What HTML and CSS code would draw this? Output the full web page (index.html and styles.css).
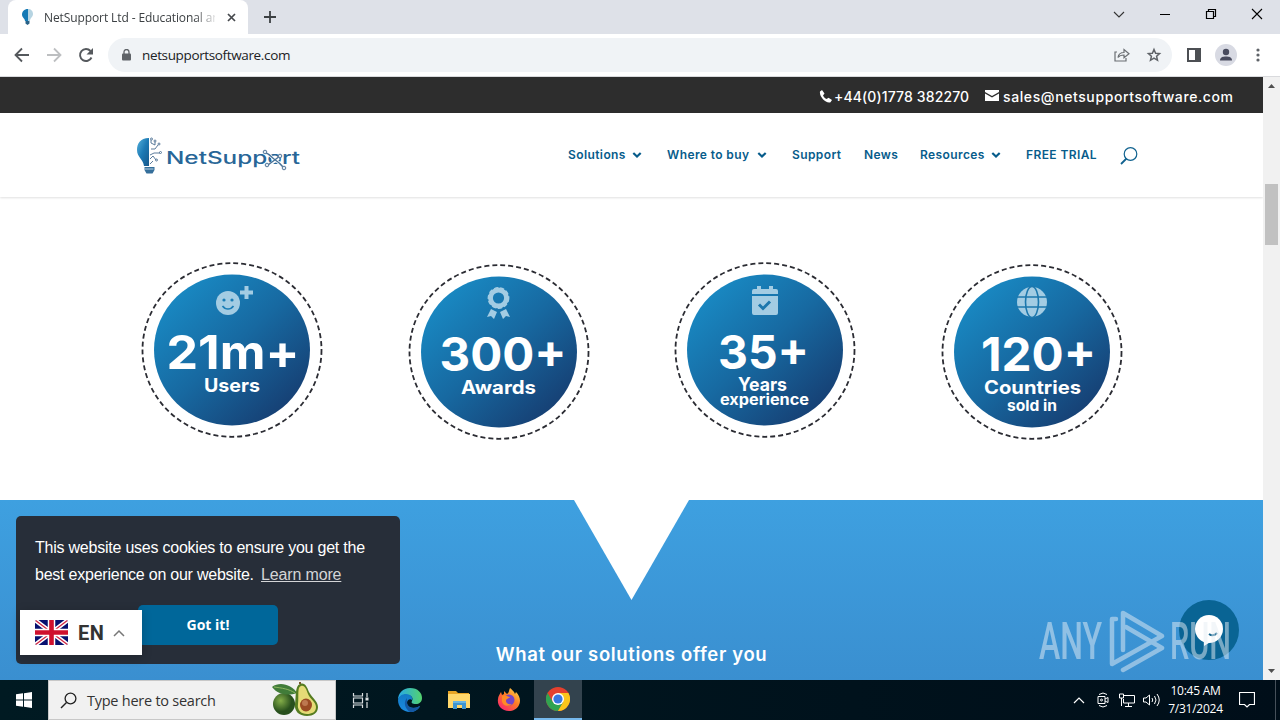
FILE: index.html
```html
<!DOCTYPE html>
<html lang="en">
<head>
    <meta charset="UTF-8">
    <meta name="viewport" content="width=device-width, initial-scale=1.0">
    <title>NetSupport Ltd - Educational and Corporate Software</title>
    <link rel="stylesheet" href="styles.css">
</head>
<body>
<div class="desktop">
    <!-- Browser tabs -->
    <div class="tabstrip">
        <div class="tab">
            <svg class="favicon" width="12" height="16" viewBox="0 0 12 16"><path d="M6 0C2 0 0 2.500 0 5.500 0 8.500 3 9.500 3 12h3z" fill="#1479b5"/><path d="M6 0c3 0 5 2 5 5S8 9 8 12H6z" fill="#b6d4e2"/><path d="M3.500 12h4v2.500L5.500 16l-2-1.500z" fill="#2a6287"/></svg>
            <span class="tab-title">NetSupport Ltd - Educational and</span>
            <svg class="tab-close" width="9" height="9" viewBox="0 0 9 9"><path d="M1 1l7 7M8 1L1 8" stroke="#45484c" stroke-width="1.700"/></svg>
        </div>
        <svg class="new-tab" width="12" height="12" viewBox="0 0 12 12"><path d="M6 0v12M0 6h12" stroke="#3c4043" stroke-width="1.800"/></svg>
        <div class="window-controls">
            <svg width="12" height="12" viewBox="0 0 12 12"><path d="M1 4l5 5 5-5" fill="none" stroke="#333" stroke-width="1.100"/></svg>
            <svg width="12" height="12" viewBox="0 0 12 12"><path d="M1 6.500h10" stroke="#000"/></svg>
            <svg width="12" height="12" viewBox="0 0 12 12"><path d="M1.500 3.500h7v7h-7zM3.500 3.500v-2h7v7h-2" fill="none" stroke="#000" stroke-width="1.200"/></svg>
            <svg width="12" height="12" viewBox="0 0 12 12"><path d="M1 1l10 10M11 1L1 11" stroke="#000" stroke-width="1.100"/></svg>
        </div>
    </div>
    <!-- Address bar -->
    <div class="toolbar">
        <svg width="16" height="16" viewBox="0 0 16 16"><path d="M15 8H2M8 1.500L1.500 8 8 14.500" fill="none" stroke="#55595d" stroke-width="1.800"/></svg>
        <svg width="16" height="16" viewBox="0 0 16 16"><path d="M1 8h13M8 1.500L14.500 8 8 14.500" fill="none" stroke="#bdbfc1" stroke-width="1.800"/></svg>
        <svg width="16" height="16" viewBox="0 0 16 16"><path d="M13.500 10.500A6 6 0 1 1 12.500 4" fill="none" stroke="#55595d" stroke-width="1.900"/><path d="M15 1v6.500H8.500z" fill="#55595d"/></svg>
        <div class="omnibox">
            <svg width="9" height="12" viewBox="0 0 9 12"><rect y="4.500" width="9" height="7" rx="1" fill="#5f6368"/><path d="M2 5V3a2.500 2.500 0 0 1 5 0v2" fill="none" stroke="#5f6368" stroke-width="1.300"/></svg>
            <span class="url">netsupportsoftware.com</span>
            <svg class="share" width="16" height="14" viewBox="0 0 16 14"><path d="M3 4H1v9h11v-3" fill="none" stroke="#6b6f73" stroke-width="1.200"/><path d="M4 9.500c.5-3.500 3-5 6-5V1.500l5 4.300-5 4V7C7.500 7 5.500 7.500 4 9.500z" fill="none" stroke="#6b6f73" stroke-width="1.200"/></svg>
            <svg width="16" height="16" viewBox="0 0 16 16"><path d="M8 2.500l1.600 3.700 4 .4-3 2.700.9 4L8 11.200l-3.500 2.100.9-4-3-2.700 4-.4z" fill="none" stroke="#5f6368" stroke-width="1.500"/></svg>
        </div>
        <svg class="side-panel" width="14" height="14" viewBox="0 0 14 14"><path d="M0 0h14v14H0zM2 2v10h6V2z" fill="#4c4f53" fill-rule="evenodd"/></svg>
        <svg class="avatar" width="22" height="22" viewBox="0 0 22 22"><circle cx="11" cy="11" r="11" fill="#d8dae3"/><circle cx="11" cy="8" r="3.200" fill="#484b5e"/><path d="M5 16.500c0-3.500 3-4 6-4s6 .5 6 4z" fill="#484b5e"/></svg>
        <svg class="kebab" width="4" height="14" viewBox="0 0 4 14" fill="#5f6368"><circle cx="2" cy="2" r="1.600"/><circle cx="2" cy="7" r="1.600"/><circle cx="2" cy="12" r="1.600"/></svg>
    </div>

    <div class="viewport">
        <main class="page">
            <div class="top-header">
                <svg width="13" height="13" viewBox="0 0 13 13"><path d="M1 1.500L3 0l2.500 3.500-1.500 2c1 1.800 2 2.800 3.600 3.600l1.900-1.300 3.500 2.200-1.500 2.300C7 14 0 6.500 1 1.500z" fill="#fff"/></svg>
                <span class="phone">+44(0)1778 382270</span>
                <svg class="envelope" width="14" height="11" viewBox="0 0 14 11"><path d="M0 0h14v2L7 6 0 2zM0 3.500l7 4 7-4V11H0z" fill="#fff"/></svg>
                <span class="email">sales@netsupportsoftware.com</span>
            </div>
            <header class="main-header">
                <svg class="logo" width="170" height="42" viewBox="0 0 170 42">
                    <defs><linearGradient id="bulb" x1="0" y1="0" x2="1" y2="1"><stop offset="0" stop-color="#55b1dc"/><stop offset=".5" stop-color="#1c79b4"/><stop offset="1" stop-color="#17588c"/></linearGradient></defs>
                    <path d="M15 3C6 3 3 9 3 15c0 7 6 9 7 16h5z" fill="url(#bulb)"/>
                    <path d="M10.500 32h10v3l-2 3.500h-6l-2-3.500z" fill="#356f9b"/><path d="M10.500 34h9" stroke="#b8d2e3"/>
                    <g fill="none" stroke="#496d91" stroke-width=".9"><path d="M17 5v3l4 2V7M17 14h4l3-4M16 20l4-2h6M16 24l3-3 3 4M16 29l3-3"/><circle cx="17.500" cy="4" r="1"/><circle cx="21" cy="6" r="1"/><circle cx="25" cy="9" r="1"/><circle cx="26.500" cy="17.500" r="1"/><circle cx="22.500" cy="25" r="1"/></g>
                    <text class="logo-text" x="32" y="28.500" textLength="134" lengthAdjust="spacingAndGlyphs">NetSupport</text>
                    <path d="M131 18c4 0 6 4 9 6s6 4 9 8M135 30l10-7" fill="none" stroke="#fff" stroke-width="3"/>
                    <path d="M131 18c4 0 6 4 9 6s6 4 9 8M134 30l12-9" fill="none" stroke="#497398" stroke-width="1.400"/>
                    <g fill="#dfeaf2" stroke="#58799a"><circle cx="131" cy="17" r="1.800"/><circle cx="133" cy="30" r="1.800"/><circle cx="146" cy="21" r="1.800"/><circle cx="150" cy="33" r="1.800"/></g>
                </svg>
                <nav class="menu">
                    <a class="solutions">Solutions</a>
                    <svg class="chevron" width="10" height="6" viewBox="0 0 10 6"><path d="M1.300 1L5 4.500 8.700 1"/></svg>
                    <a class="where">Where to buy</a>
                    <svg class="chevron" width="10" height="6" viewBox="0 0 10 6"><path d="M1.300 1L5 4.500 8.700 1"/></svg>
                    <a class="support">Support</a>
                    <a class="news">News</a>
                    <a class="resources">Resources</a>
                    <svg class="chevron" width="10" height="6" viewBox="0 0 10 6"><path d="M1.300 1L5 4.500 8.700 1"/></svg>
                    <a class="trial">FREE TRIAL</a>
                    <svg class="search" width="18" height="18" viewBox="0 0 18 18"><circle cx="10.500" cy="7" r="6.300" fill="none" stroke="#10628f" stroke-width="1.200"/><path d="M6.500 11.500L1 17" stroke="#10628f" stroke-width="1.800"/></svg>
                </nav>
            </header>

            <section class="stats">
                <svg class="stat" width="200" height="180" viewBox="0 0 200 180">
                    <defs><linearGradient id="disc" x1=".1" y1=".1" x2=".85" y2=".9"><stop offset="0" stop-color="#198bc5"/><stop offset=".5" stop-color="#1769a1"/><stop offset="1" stop-color="#163f73"/></linearGradient></defs>
                    <ellipse class="ring" cx="100" cy="90" rx="89.500" ry="86.800"/><ellipse cx="100" cy="90" rx="78" ry="75.500" fill="url(#disc)"/>
                    <g fill="#a3cce3"><circle cx="96" cy="43" r="12"/><path d="M108 30.500h4.500V26h4v4.500h4.500v4h-4.500V39h-4v-4.500H108z"/></g>
                    <circle cx="92" cy="40" r="1.600" fill="#1b7db6"/><circle cx="100" cy="40" r="1.600" fill="#1b7db6"/><path d="M90.500 46c3 4 8 4 11 0" fill="none" stroke="#1b7db6" stroke-width="1.600"/>
                    <text class="number" x="34.500" y="109" textLength="133" lengthAdjust="spacingAndGlyphs">21m+</text>
                    <text class="label" x="72" y="132" textLength="56" lengthAdjust="spacingAndGlyphs">Users</text>
                </svg>
                <svg class="stat lower" width="200" height="180" viewBox="0 0 200 180">
                    <ellipse class="ring" cx="100" cy="90" rx="89.500" ry="86.800"/><ellipse cx="100" cy="90" rx="78" ry="75.500" fill="url(#disc)"/>
                    <circle cx="99.500" cy="36" r="8" fill="none" stroke="#a3cce3" stroke-width="4.800"/><circle cx="99.500" cy="36" r="9.900" fill="none" stroke="#a3cce3" stroke-width="2" stroke-dasharray="4 2"/>
                    <path d="M92 47l6 3-3 7-3-3-4 1zM107 47l-6 3 3 7 3-3 4 1z" fill="#a3cce3"/>
                    <text class="number" x="40.500" y="109" textLength="127" lengthAdjust="spacingAndGlyphs">300+</text>
                    <text class="label" x="62" y="132" textLength="75" lengthAdjust="spacingAndGlyphs">Awards</text>
                </svg>
                <svg class="stat" width="200" height="180" viewBox="0 0 200 180">
                    <ellipse class="ring" cx="100" cy="90" rx="89.500" ry="86.800"/><ellipse cx="100" cy="90" rx="78" ry="75.500" fill="url(#disc)"/>
                    <path d="M87 34v-3q0-2 2-2h3v-3h4v3h8v-3h4v3h3q2 0 2 2v3zM87 36h26v17q0 2-2 2H89q-2 0-2-2z" fill="#a3cce3"/>
                    <path d="M94 44.500l4 4 7-7" fill="none" stroke="#1c77ad" stroke-width="3"/>
                    <text class="number" x="53" y="109" textLength="91" lengthAdjust="spacingAndGlyphs">35+</text>
                    <text class="label" x="73" y="131" textLength="49" lengthAdjust="spacingAndGlyphs">Years</text>
                    <text class="sublabel" x="55" y="145" textLength="89" lengthAdjust="spacingAndGlyphs">experience</text>
                </svg>
                <svg class="stat lower" width="200" height="180" viewBox="0 0 200 180">
                    <ellipse class="ring" cx="100" cy="90" rx="89.500" ry="86.800"/><ellipse cx="100" cy="90" rx="78" ry="75.500" fill="url(#disc)"/>
                    <circle cx="100" cy="40" r="15" fill="#a3cce3"/><path d="M85 35h30M85 45h30" stroke="#1c77ad" stroke-width="1.600"/><ellipse cx="100" cy="40" rx="6.500" ry="15.500" fill="none" stroke="#1c77ad" stroke-width="1.600"/>
                    <text class="number" x="49" y="109" textLength="115" lengthAdjust="spacingAndGlyphs">120+</text>
                    <text class="label" x="52" y="132" textLength="97" lengthAdjust="spacingAndGlyphs">Countries</text>
                    <text class="sublabel" x="75" y="149" textLength="50" lengthAdjust="spacingAndGlyphs">sold in</text>
                </svg>
            </section>

            <section class="solutions-band">
                <div class="notch"></div>
                <h2>What our solutions offer you</h2>
            </section>
        </main>
        <div class="scrollbar">
            <svg width="7" height="4" viewBox="0 0 7 4"><path d="M0 4L3.500 0 7 4z" fill="#505050"/></svg>
            <div class="thumb"></div>
            <svg width="7" height="4" viewBox="0 0 7 4"><path d="M0 0l3.500 4L7 0z" fill="#505050"/></svg>
        </div>
    </div>

    <!-- Taskbar -->
    <div class="taskbar">
        <div class="start"><svg width="16" height="16" viewBox="0 0 16 16"><path d="M0 2.300L7 1.300v6.200H0zM8 1.200L16 0v7.500H8zM0 8.500h7v6.200l-7-1zM8 8.500h8V16l-8-1.200z" fill="#fff"/></svg></div>
        <div class="task-search">
            <svg width="17" height="17" viewBox="0 0 17 17"><circle cx="10.500" cy="6.500" r="5.400" fill="none" stroke="#222" stroke-width="1.300"/><path d="M6.500 10.500L1 16" stroke="#222" stroke-width="1.400"/></svg>
            <span>Type here to search</span>
            <svg class="avocado" width="48" height="36" viewBox="0 0 48 36">
                <defs><radialGradient id="skin" cx=".35" cy=".35"><stop offset="0" stop-color="#84ae49"/><stop offset="1" stop-color="#28501d"/></radialGradient></defs>
                <circle cx="12" cy="22" r="11" fill="url(#skin)"/>
                <path d="M0 5c8-6 20-2 25 6-9 3-19 2-25-6z" fill="#417c39"/><path d="M2 5c8 1 15 2 21 6" stroke="#8db761" fill="none"/>
                <path d="M28 2c5-2 7 3 9 8 3 6 9 9 9 15 0 6-5 9-11 9-8 0-13-5-12-12 1-8 0-18 5-20z" fill="#557c20"/><path d="M29 4c4-1 5 3 7 8 2 5 8 8 8 13 0 5-4 7-9 7-6 0-10-4-9-10 1-8-1-17 3-18z" fill="#e5db76"/>
                <ellipse cx="34" cy="23" rx="6" ry="6.500" fill="#9a4b23"/><ellipse cx="33" cy="21" rx="3" ry="3" fill="#bd7850"/><path d="M28 2V0" stroke="#76562d" stroke-width="2"/>
            </svg>
        </div>
        <div class="task-item"><svg width="17" height="17" viewBox="0 0 17 17" fill="none" stroke="#dce1e3" stroke-width="1.200"><path d="M1.500 1v3h9V1M1.500 6h9v5h-9zM1.500 16v-3h9v3M15 1v4M15 10v6"/><path d="M13.500 7h3" stroke-width="3"/></svg></div>
        <div class="task-item"><svg width="24" height="24" viewBox="0 0 24 24">
            <defs><linearGradient id="edgeTop"><stop stop-color="#27a9e8"/><stop offset="1" stop-color="#54d36e"/></linearGradient><linearGradient id="edgeBody" x2="0" y2="1"><stop stop-color="#127ac6"/><stop offset="1" stop-color="#1b8be0"/></linearGradient></defs>
            <path d="M0 12C0 5 5 0 12 0c8 0 12 5 12 10 0 4-3 6-6 6-4 0-5-1-4-3 2-4-2-6-5-6-5 0-9 2-9 6z" fill="url(#edgeTop)"/>
            <path d="M0 12c1-4 4-6 8-6 5 0 7 4 6 6-2-2-5 0-5 3 0 4 6 7 13 3-2 4-6 6-10 6C5 24 0 19 0 12z" fill="url(#edgeBody)"/>
            <path d="M9 10c-4 4-2 11 3 14 4 0 8-2 10-6-7 4-13 1-13-4z" fill="#1458a3"/></svg></div>
        <div class="task-item"><svg width="22" height="20" viewBox="0 0 22 20"><path d="M0 1h8l2 2h11v15H0z" fill="#e8a526"/><path d="M0 4h22v14H0z" fill="#ffd76b"/><path d="M5 11h13v8h-4v-4H9v4H5z" fill="#3d94d1"/><path d="M5 11h13v2H5z" fill="#67b4e2"/></svg></div>
        <div class="task-item"><svg width="24" height="24" viewBox="0 0 24 24">
            <defs><linearGradient id="fox" x1="1" y1="0" x2=".2" y2="1"><stop stop-color="#ffe34d"/><stop offset=".5" stop-color="#ff7b24"/><stop offset="1" stop-color="#f92570"/></linearGradient></defs>
            <path d="M13 0c2 2 4 3 5 6l1-2c4 4 5 9 3 13-2 4-6 6-10 6C4 23 0 17 1 11c0-3 2-5 3-7l1 3 2-1V3l3 3c2-1 2-4 3-6z" fill="url(#fox)"/><circle cx="12" cy="12" r="5.500" fill="#7545c7"/><path d="M5 8c4-2 5 1 8 1-1 2-4 1-4 4 0 2 3 4 6 3-4 4-11 1-10-5z" fill="#ff8b26"/></svg></div>
        <div class="task-item active"><svg width="24" height="24" viewBox="0 0 24 24"><circle cx="12" cy="12" r="12" fill="#e4402e"/><path d="M1.600 6A12 12 0 0 0 12 24l5.500-9H6.800z" fill="#31a350"/><path d="M22.400 6A12 12 0 0 1 12 24l5.200-9L12 6z" fill="#fbc51b"/><circle cx="12" cy="12" r="6" fill="#fff"/><circle cx="12" cy="12" r="4.600" fill="#3977df"/></svg></div>
        <div class="tray">
            <svg width="12" height="8" viewBox="0 0 12 8"><path d="M1 7l5-5 5 5" fill="none" stroke="#fff" stroke-width="1.200"/></svg>
            <svg width="12" height="16" viewBox="0 0 12 16" fill="none" stroke="#fff"><path d="M1 4.500h7v7H1zM8 7l3-1.500v5L8 9M2 2.500q4-3 8 0M2 13.500q4 3 8 0"/><circle cx="4.500" cy="8" r="1"/></svg>
            <svg class="network" width="16" height="14" viewBox="0 0 16 14" fill="none" stroke="#fff"><path d="M5 2.500h10.500v7.500H4.500V6M9.500 10v3M6 13.500h7M.5 1h4v4h-4zM2.500 5v8"/></svg>
            <svg class="volume" width="17" height="14" viewBox="0 0 17 14" fill="none" stroke="#fff"><path d="M.5 5v4H3l3.500 3V2L3 5zM9 5q1.500 2 0 4M11.500 3q3 4 0 8M14 1q4.500 6 0 12"/></svg>
        </div>
        <div class="clock"><span class="time">10:45 AM</span><span class="date">7/31/2024</span></div>
        <svg class="action-center" width="16" height="16" viewBox="0 0 16 16"><path d="M.5.500h15v12H10.500L8 15l-2.500-2.500H.5z" fill="none" stroke="#fff" stroke-width="1.200"/></svg>
        <div class="show-desktop"></div>
    </div>

    <!-- Cookie notice -->
    <div class="cookie">
        <p>This website uses cookies to ensure you get the<br>best experience on our website. <a>Learn more</a></p>
        <button class="got-it">Got it!</button>
    </div>
    <div class="language">
        <svg width="33" height="25" viewBox="0 0 33 25"><defs><clipPath id="flag"><rect width="33" height="25" rx="2"/></clipPath></defs><g clip-path="url(#flag)"><path d="M0 0h33v25H0z" fill="#07106f"/><path d="M0 0l33 25M33 0L0 25" stroke="#fff" stroke-width="4.200"/><path d="M0 0l33 25M33 0L0 25" stroke="#d12340" stroke-width="1.300"/><path d="M16.500 0v25M0 12.500h33" stroke="#fff" stroke-width="7.500"/><path d="M16.500 0v25M0 12.500h33" stroke="#cf102d" stroke-width="4.600"/></g></svg>
        <span>EN</span>
        <svg width="12" height="8" viewBox="0 0 12 8"><path d="M1 7l5-5 5 5" fill="none" stroke="#777" stroke-width="1.500"/></svg>
    </div>
    <div class="chat"><svg width="28" height="31" viewBox="0 0 28 31"><circle cx="14" cy="14" r="14" fill="#fff"/><path d="M9 26v5l8-5z" fill="#fff"/><path d="M14 19q4 3 8-1" fill="none" stroke="#17668f" stroke-width="2"/></svg></div>
    <svg class="watermark" width="200" height="68" viewBox="0 0 200 68">
        <text x="3" y="53" textLength="63" lengthAdjust="spacingAndGlyphs">ANY</text>
        <g class="watermark-mark"><path d="M80 13h-4v45l50-28L87 7v37"/><path d="M90 21l36 21-39 22"/></g>
        <text x="134" y="53" textLength="61" lengthAdjust="spacingAndGlyphs">RUN</text>
    </svg>
</div>
</body>
</html>
```
FILE: styles.css
```css
* {
    box-sizing: border-box;
}
body {
    margin: 0;
    overflow: hidden;
}
svg {
    display: block;
    flex: none;
}
.desktop {
    position: relative;
    display: flex;
    flex-direction: column;
    width: 1280px;
    height: 720px;
    overflow: hidden;
    background: #fff;
    font-family: "Open Sans", sans-serif;
    white-space: nowrap;
}

/* browser */
.tabstrip {
    display: flex;
    height: 34px;
    background: #dee1e8;
    padding-left: 8px;
}
.tab {
    display: flex;
    align-items: center;
    width: 240px;
    height: 34px;
    padding-left: 14px;
    background: #fff;
    border-radius: 8px 8px 0 0;
}
.tab-title {
    width: 171px;
    margin-left: 10px;
    overflow: hidden;
    font-size: 12px;
    letter-spacing: -0.1px;
    color: #3c4043;
    -webkit-mask-image: linear-gradient(to right, #000 88%, transparent 102%);
    mask-image: linear-gradient(to right, #000 88%, transparent 102%);
}
.tab-close {
    margin-left: 12px;
}
.new-tab {
    margin: 11px 0 0 16px;
}
.window-controls {
    display: flex;
    gap: 34px;
    margin: 8px 17px 0 auto;
}
.toolbar {
    display: flex;
    align-items: center;
    gap: 16px;
    height: 43px;
    padding: 0 19px 0 14px;
    border-bottom: 1px solid #d9dadd;
}
.omnibox {
    display: flex;
    align-items: center;
    width: 1064px;
    height: 34px;
    padding: 0 10px 0 14px;
    margin-left: -2px;
    border-radius: 17px;
    background: #f0f3f6;
}
.url {
    margin-left: 11px;
    font-size: 13.5px;
    letter-spacing: -0.36px;
    color: #202124;
}
.share {
    margin: 0 16px 0 auto;
}
.side-panel {
    margin-left: -1px;
}
.avatar {
    margin-left: -2px;
}
.kebab {
    margin-left: 3px;
}
.viewport {
    display: flex;
    height: 603px;
}
.page {
    width: 1263px;
    font-family: "Inter", sans-serif;
}
.scrollbar {
    display: flex;
    flex-direction: column;
    align-items: center;
    width: 17px;
    padding: 7px 0;
    background: #f1f1f1;
}
.scrollbar .thumb {
    width: 13px;
    height: 61px;
    margin: 96px 0 auto;
    background: #c1c1c1;
}

/* site header */
.top-header {
    display: flex;
    align-items: center;
    height: 36px;
    padding: 2px 0 0 819px;
    background: #2d2d2d;
    color: #fff;
    font-size: 14px;
    font-weight: 500;
}
.phone {
    width: 135px;
    margin: 0 16px 0 2px;
    letter-spacing: 0.12px;
}
.envelope {
    margin-bottom: 2px;
}
.email {
    margin-left: 4px;
    letter-spacing: 0.6px;
}
.main-header {
    display: flex;
    align-items: center;
    height: 84px;
    padding-left: 134px;
    box-shadow: 0 1px 2px rgba(0,0,0,0.12);
}
.logo {
    margin-top: 2px;
}
.logo-text {
    font-family: "Inter", sans-serif;
    font-size: 17px;
    fill: #286697;
    font-weight: 500;
}
.menu {
    display: flex;
    align-items: center;
    margin: -2px 0 0 264px;
    font-size: 12px;
    font-weight: 600;
    letter-spacing: 0.4px;
    color: #075c8b;
}
.chevron {
    margin: 2px 25px 0 0;
    fill: none;
    stroke: #075c8b;
    stroke-width: 2.2;
}
.solutions { width: 64px; }
.where { width: 90px; }
.support { width: 72px; }
.news { width: 56px; }
.resources { width: 71px; }
.trial { width: 94px; }
.search { margin-top: 4px; }

.stats {
    display: grid;
    grid-template-columns: repeat(4, 266.7px);
    justify-items: center;
    height: 303px;
    padding: 63px 0 0 98.5px;
}
.lower {
    margin-top: 2px;
}
.ring {
    fill: none;
    stroke: #2b2c33;
    stroke-width: 1.8;
    stroke-dasharray: 5 3;
}
.stat text {
    font-family: "Inter", sans-serif;
    font-weight: 700;
    fill: #fff;
}
.stat .number { font-size: 47px; }
.stat .label { font-size: 18.5px; }
.stat .sublabel { font-size: 15px; }

.solutions-band {
    height: 180px;
    background: linear-gradient(#3ea0e0, #3a8fd0);
    color: #fff;
    text-align: center;
}
.notch {
    width: 115px;
    height: 100px;
    margin: 0 auto;
    background: #fff;
    clip-path: polygon(0 0, 100% 0, 50% 100%);
}
.solutions-band h2 {
    margin: 42px 0 0;
    font-size: 18.5px;
    line-height: 24px;
    font-weight: 600;
    letter-spacing: 0.65px;
}

/* taskbar */
.taskbar {
    display: flex;
    align-items: center;
    height: 40px;
    background: linear-gradient(90deg, #001a22, #000e19);
    color: #fff;
}
.start {
    width: 48px;
    padding-left: 16px;
}
.task-search {
    display: flex;
    align-items: center;
    width: 288px;
    height: 40px;
    padding-left: 11px;
    background: #f1f1f1;
    border: 1px solid #c8c8c8;
    color: #333;
    font-size: 14.5px;
    letter-spacing: -0.25px;
}
.task-search span {
    width: 129px;
    margin-left: 10px;
}
.avocado {
    margin-left: 56px;
}
.task-item {
    display: flex;
    align-items: center;
    justify-content: center;
    width: 48px;
    height: 40px;
    margin-right: 1.5px;
}
.active {
    margin: 0;
    background: #33434e;
    border-bottom: 2px solid #76b9ed;
}
.tray {
    display: flex;
    align-items: center;
    gap: 12px;
    margin-left: auto;
}
.network {
    margin-left: -2px;
}
.volume {
    margin-left: -4px;
}
.clock {
    display: flex;
    flex-direction: column;
    align-items: center;
    width: 71px;
    font-size: 12px;
    line-height: 18px;
    letter-spacing: -0.25px;
}
.action-center {
    margin-left: 8px;
}
.show-desktop {
    width: 5px;
    height: 40px;
    margin-left: 20px;
    border-left: 1px solid #46505a;
}

/* overlays */
.cookie {
    position: absolute;
    left: 16px;
    top: 516px;
    width: 384px;
    height: 148px;
    padding: 18px 19px;
    border-radius: 5px;
    background: #272e39;
    color: #fff;
    font-family: "Liberation Sans", Arial, sans-serif;
    font-size: 16px;
    line-height: 27px;
    letter-spacing: -0.23px;
}
.cookie p {
    margin: 0 0 17px;
}
.cookie a {
    margin-left: 3px;
    letter-spacing: -0.15px;
    text-decoration: underline;
    color: #d4d5d7;
}
.got-it {
    display: block;
    width: 140px;
    height: 40px;
    padding: 0;
    margin-left: 103px;
    border: none;
    border-radius: 5px;
    background: #00679a;
    color: #fff;
    font: 700 14px "Open Sans", sans-serif;
    line-height: 38px;
}
.language {
    position: absolute;
    left: 20px;
    top: 610px;
    display: flex;
    align-items: center;
    width: 122px;
    height: 45px;
    padding-left: 15px;
    background: #fff;
    box-shadow: 0 2px 10px rgba(0,0,0,0.2);
    font: 700 20px "Roboto", sans-serif;
    letter-spacing: 0.6px;
    color: #333;
}
.language span {
    width: 35px;
    margin-left: 10px;
}
.chat {
    position: absolute;
    left: 1179px;
    top: 600px;
    width: 60px;
    height: 60px;
    padding: 15px 0 0 16px;
    border-radius: 50%;
    background: #096494;
}
.watermark {
    position: absolute;
    left: 1036px;
    top: 606px;
    opacity: 0.5;
}
.watermark text {
    font-family: "Roboto", sans-serif;
    font-size: 52px;
    font-weight: 500;
    fill: #e6eef5;
}
.watermark-mark {
    fill: none;
    stroke: #e6eef5;
    stroke-width: 4.5;
    stroke-linejoin: round;
    stroke-linecap: round;
}
```
